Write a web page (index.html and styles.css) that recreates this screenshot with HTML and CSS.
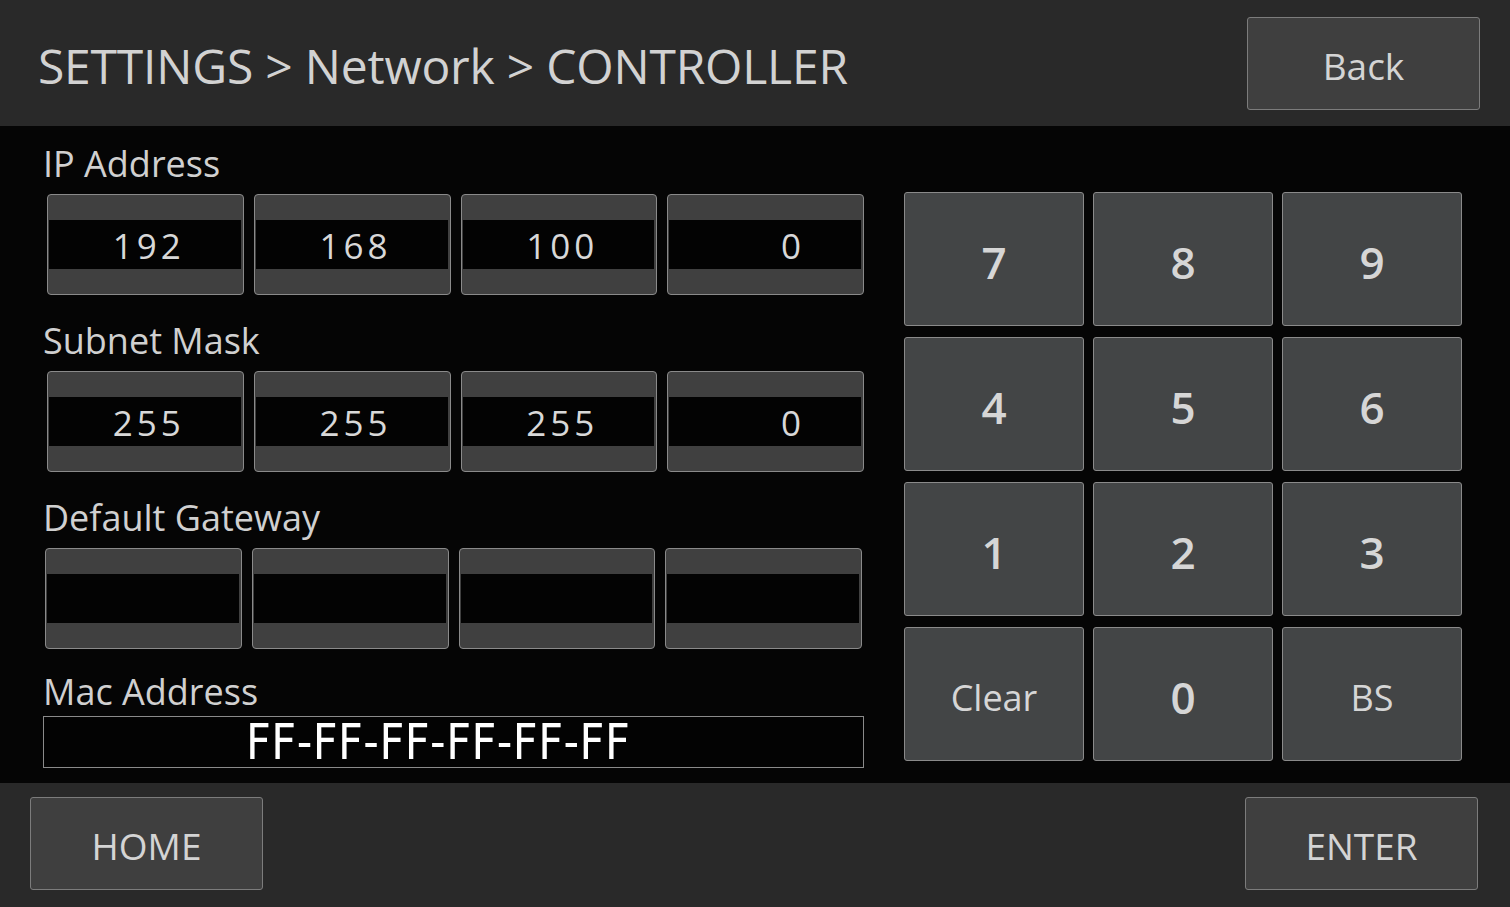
FILE: index.html
```html
<!DOCTYPE html>
<html>
<head>
<meta charset="utf-8">
<link rel="stylesheet" href="styles.css">
</head>
<body>
<div class="screen">
  <header class="top">
    <div class="title">SETTINGS &gt; Network &gt; CONTROLLER</div>
    <div class="btn back">Back</div>
  </header>
  <main class="main">
    <section class="left">
      <div class="group">
        <div class="label">IP Address</div>
        <div class="row">
          <div class="field"><div class="band">192</div></div>
          <div class="field"><div class="band">168</div></div>
          <div class="field"><div class="band">100</div></div>
          <div class="field"><div class="band">0</div></div>
        </div>
      </div>
      <div class="group">
        <div class="label">Subnet Mask</div>
        <div class="row">
          <div class="field"><div class="band">255</div></div>
          <div class="field"><div class="band">255</div></div>
          <div class="field"><div class="band">255</div></div>
          <div class="field"><div class="band">0</div></div>
        </div>
      </div>
      <div class="group">
        <div class="label">Default Gateway</div>
        <div class="row row-shift">
          <div class="field"><div class="band"></div></div>
          <div class="field"><div class="band"></div></div>
          <div class="field"><div class="band"></div></div>
          <div class="field"><div class="band"></div></div>
        </div>
      </div>
      <div class="group group-mac">
        <div class="label label-mac">Mac Address</div>
        <div class="mac"><span class="mac-text">FF-FF-FF-FF-FF-FF</span></div>
      </div>
    </section>
    <section class="keypad">
      <div class="key digit">7</div>
      <div class="key digit">8</div>
      <div class="key digit">9</div>
      <div class="key digit">4</div>
      <div class="key digit">5</div>
      <div class="key digit">6</div>
      <div class="key digit">1</div>
      <div class="key digit">2</div>
      <div class="key digit">3</div>
      <div class="key word">Clear</div>
      <div class="key digit">0</div>
      <div class="key word">BS</div>
    </section>
  </main>
  <footer class="bottom">
    <div class="btn">HOME</div>
    <div class="btn">ENTER</div>
  </footer>
</div>
</body>
</html>
```
FILE: styles.css
```css
html, body {
  margin: 0;
  padding: 0;
  background: #050505;
}
.screen {
  width: 1510px;
  height: 907px;
  display: flex;
  flex-direction: column;
  font-family: "Open Sans", "Noto Sans", sans-serif;
  color: #d2d2d2;
  overflow: hidden;
}
.top {
  height: 126px;
  flex-shrink: 0;
  background: #292929;
  display: flex;
  align-items: flex-start;
  justify-content: space-between;
  padding: 0 30px 0 38px;
  box-sizing: border-box;
}
.title {
  font-size: 48px;
  line-height: 48px;
  margin-top: 42px;
  letter-spacing: -0.2px;
  white-space: nowrap;
}
.btn {
  width: 233px;
  height: 93px;
  box-sizing: border-box;
  background: #3f3f3f;
  border: 1px solid #7c7c7c;
  border-radius: 3px;
  display: flex;
  align-items: center;
  justify-content: center;
  font-size: 37px;
  color: #d4d4d4;
  padding-top: 3px;
}
.back {
  margin-top: 17px;
}
.main {
  flex: 1;
  min-height: 0;
  display: flex;
  padding: 18px 0 0 43px;
  gap: 40px;
  box-sizing: border-box;
  background: #050505;
  overflow: hidden;
}
.left {
  width: 821px;
  display: flex;
  flex-direction: column;
}
.group {
  margin-bottom: 26px;
}
.label {
  height: 50px;
  font-size: 36px;
  line-height: 40px;
  color: #d0d0d0;
  white-space: nowrap;
}
.label-mac {
  height: 41px;
  line-height: 34px;
}
.group-mac {
  margin-bottom: 0;
}
.row {
  display: grid;
  grid-template-columns: repeat(4, 1fr);
  gap: 10px;
  padding-left: 4px;
}
.row-shift {
  padding-left: 2px;
  margin-right: 2px;
}
.field {
  height: 101px;
  box-sizing: border-box;
  background: #404040;
  border: 1px solid #8a8a8a;
  border-radius: 4px;
  padding: 25px 2px 24px 1px;
}
.band {
  height: 49px;
  background: #030303;
  font-size: 35px;
  line-height: 51px;
  letter-spacing: 4px;
  text-align: right;
  padding-right: 56px;
  color: #d8d8d8;
}
.mac {
  height: 52px;
  box-sizing: border-box;
  border: 1px solid #8a8a8a;
  background: #030303;
  display: flex;
  align-items: center;
  justify-content: center;
  padding-right: 30px;
}
.mac-text {
  display: inline-block;
  font-family: "DejaVu Sans", sans-serif;
  font-stretch: condensed;
  font-size: 50px;
  line-height: 50px;
  color: #ffffff;
  letter-spacing: 0.5px;
  transform: scaleX(0.96);
}
.keypad {
  margin-top: 48px;
  display: grid;
  grid-template-columns: repeat(3, 180px);
  grid-auto-rows: 134px;
  column-gap: 9px;
  row-gap: 11px;
  align-content: start;
}
.key {
  box-sizing: border-box;
  background: #434546;
  border: 1px solid #8a8a8a;
  border-radius: 3px;
  display: flex;
  align-items: center;
  justify-content: center;
  color: #d6d6d6;
  padding-top: 6px;
}
.digit {
  font-size: 44px;
  font-weight: 600;
}
.word {
  font-size: 36px;
}
.bottom {
  height: 124px;
  flex-shrink: 0;
  background: #292929;
  display: flex;
  justify-content: space-between;
  align-items: flex-start;
  padding: 14px 32px 0 30px;
  box-sizing: border-box;
}
```
